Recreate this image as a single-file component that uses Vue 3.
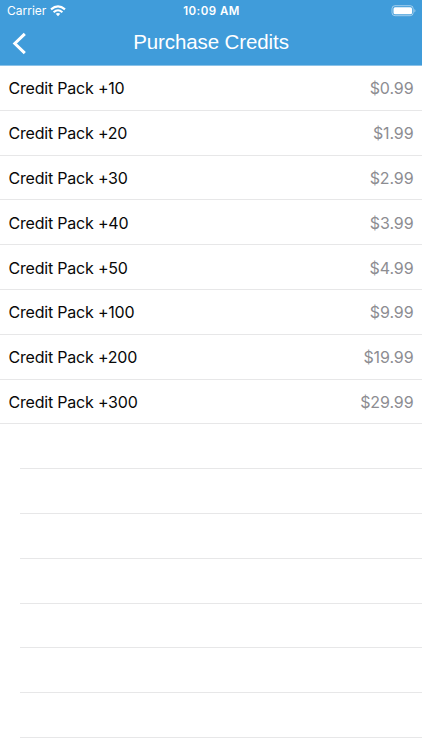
<script setup>
const packs = [
  { credits: 10, price: '0.99' },
  { credits: 20, price: '1.99' },
  { credits: 30, price: '2.99' },
  { credits: 40, price: '3.99' },
  { credits: 50, price: '4.99' },
  { credits: 100, price: '9.99' },
  { credits: 200, price: '19.99' },
  { credits: 300, price: '29.99' },
]
const emptyRows = 7
</script>

<template>
  <div class="screen">
    <header class="header">
      <div class="status">
        <div class="carrier">
          <span>Carrier</span>
          <svg class="wifi" width="16" height="12" viewBox="0 0 16 12" fill="none" stroke="#fff" stroke-width="2.1">
            <path d="M1 4.4Q8 -1.8 15 4.4" />
            <path d="M3.6 7.2Q8 3.3 12.4 7.2" />
            <path d="M5.7 8.8Q8 7 10.3 8.8L8 11.3Z" fill="#fff" stroke="none" />
          </svg>
        </div>
        <time class="time">10:09 AM</time>
        <svg class="battery" width="25" height="12" viewBox="0 0 25 12">
          <rect x="1" y=".7" width="21.2" height="10" rx="3" fill="none" stroke="#fff" stroke-opacity=".5" />
          <rect x="2.5" y="2.2" width="18.5" height="7" rx="1.5" fill="#fff" />
          <path d="M23.4 4v3.6c1.4-.6 1.4-3 0-3.6Z" fill="#fff" fill-opacity=".5" />
        </svg>
      </div>
      <nav class="nav">
        <svg class="back" width="16" height="24" viewBox="0 0 16 24" fill="none" stroke="#fff" stroke-width="3">
          <path d="M13.8 1.8L3.8 11.5L13.8 21.2" />
        </svg>
        <h1 class="title">Purchase Credits</h1>
      </nav>
    </header>
    <ul class="list">
      <li v-for="pack in packs" :key="pack.credits" class="row">
        <span class="name">Credit Pack +{{ pack.credits }}</span>
        <span class="price">${{ pack.price }}</span>
      </li>
      <li v-for="n in emptyRows" :key="'empty' + n" class="row empty"></li>
    </ul>
  </div>
</template>

<style>
body {
  margin: 0;
  background: #fff;
}
</style>

<style scoped>
.screen {
  height: 750px;
  overflow: hidden;
  background: #fff;
  font-family: Inter, "Liberation Sans", sans-serif;
}
.header {
  box-sizing: border-box;
  height: 66px;
  background: #409cda;
  border-bottom: 1px solid #8bc2e8;
}
.status {
  display: grid;
  grid-template-columns: 1fr auto 1fr;
  align-items: center;
  height: 22px;
  padding: 0 6px 0 7px;
  color: #fff;
  font-size: 12px;
  line-height: 22px;
}
.carrier {
  display: flex;
  align-items: center;
  gap: 4px;
}
.time {
  font-size: 11.5px;
  font-weight: 600;
  letter-spacing: 0.45px;
}
.battery {
  justify-self: end;
}
.nav {
  display: grid;
  grid-template-columns: 16px 1fr 16px;
  align-items: center;
  height: 43px;
  padding: 0 11px;
}
.title {
  margin: 0;
  padding-bottom: 3px;
  color: #fff;
  font-family: "Liberation Sans", sans-serif;
  font-size: 20.5px;
  font-weight: 400;
  line-height: 26px;
  letter-spacing: -0.1px;
  text-align: center;
}
.list {
  margin: 0;
  padding: 0;
  list-style: none;
}
.row {
  box-sizing: border-box;
  display: flex;
  align-items: center;
  justify-content: space-between;
  height: 44.8px;
  padding: 1px 8.5px 0;
  border-bottom: 1px solid #e7e7e8;
  font-size: 16px;
}
.name {
  color: #080808;
  letter-spacing: -0.2px;
}
.price {
  color: #8d8d92;
  letter-spacing: -0.1px;
}
.empty {
  margin-left: 20px;
}
</style>
